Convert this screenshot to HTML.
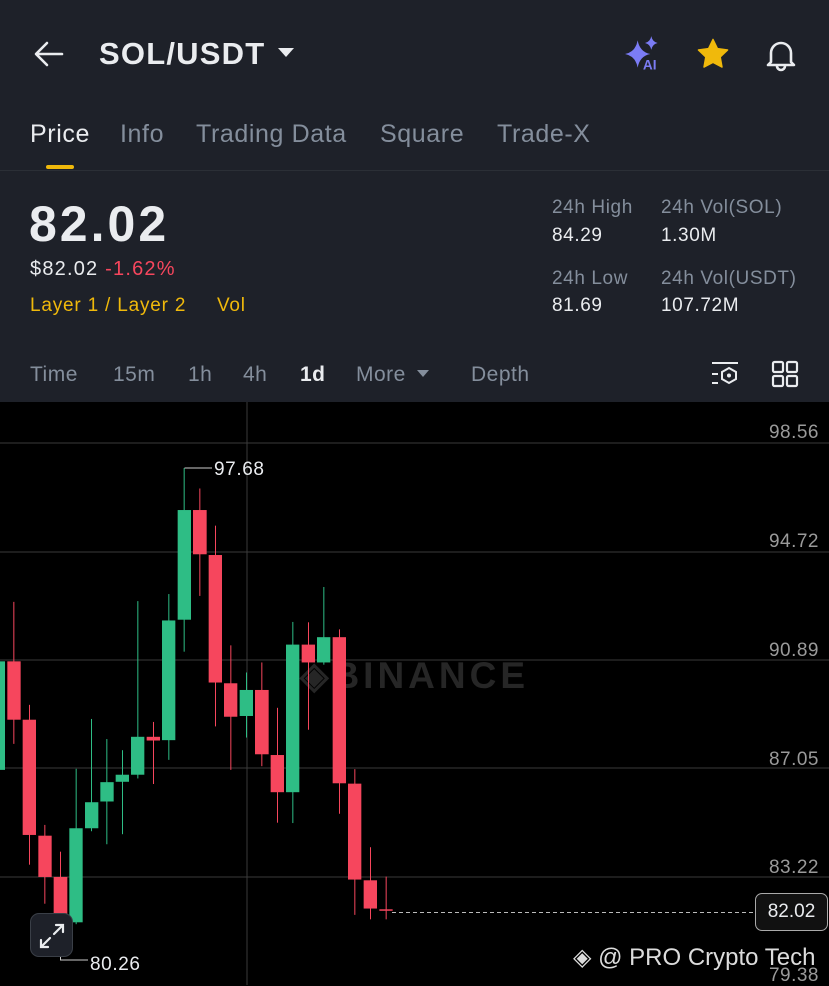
<!DOCTYPE html>
<html><head><meta charset="utf-8"><style>
*{margin:0;padding:0;box-sizing:border-box}
body{width:829px;height:985px;overflow:hidden;background:#000;font-family:"Liberation Sans",sans-serif;position:relative}
#top{position:absolute;left:0;top:0;width:829px;height:402px;background:#1e2129}
.t{position:absolute;white-space:nowrap;line-height:1}
.g{color:#848e9c}.w{color:#eaecef}.y{color:#f0b90b}
.tab{font-size:25px;letter-spacing:0.6px}
.st{font-size:19px;letter-spacing:0.6px}
.tm{font-size:21px;letter-spacing:0.5px}
.ax{position:absolute;right:10px;color:#9a9a9a;font-size:19px;line-height:1;letter-spacing:0.5px}
</style></head><body>
<div id="top">
<svg style="position:absolute;left:33px;top:40px" width="32" height="28" viewBox="0 0 32 28"><path d="M29 14H4M14 3L3 14l11 11" fill="none" stroke="#eaecef" stroke-width="2.6" stroke-linecap="round" stroke-linejoin="round"/></svg>
<div class="t w" style="left:99px;top:38px;font-size:31px;font-weight:bold;letter-spacing:1.2px">SOL/USDT</div>
<svg style="position:absolute;left:277px;top:47px" width="18" height="12"><path d="M1 1h16l-8 9z" fill="#eaecef"/></svg>
<svg style="position:absolute;left:624px;top:36px" width="42" height="36" viewBox="0 0 40 34"><path d="M13 4 Q15 15 25 17 Q15 19 13 30 Q11 19 1 17 Q11 15 13 4Z" fill="#7b7cf5"/><path d="M26 0 Q27 5.5 32 6.5 Q27 7.5 26 13 Q25 7.5 20 6.5 Q25 5.5 26 0Z" fill="#7b7cf5"/><text x="18" y="32" font-size="13" font-weight="bold" fill="#7b7cf5" font-family="Liberation Sans">AI</text></svg>
<svg style="position:absolute;left:696px;top:38px" width="34" height="32" viewBox="0 0 24 23"><path d="M12 1l3.2 6.6 7.3 1-5.3 5.1 1.3 7.2L12 17.5 5.5 20.9l1.3-7.2L1.5 8.6l7.3-1z" fill="#f0b90b" stroke="#f0b90b" stroke-linejoin="round"/></svg>
<svg style="position:absolute;left:764px;top:38px" width="34" height="34" viewBox="0 0 34 34"><path d="M7 24V15a10 10 0 0 1 20 0v9l3 3H4z" fill="none" stroke="#eaecef" stroke-width="2.6" stroke-linejoin="round"/><path d="M13 28a4 4 0 0 0 8 0" fill="none" stroke="#eaecef" stroke-width="2.6"/></svg>
<div class="t w tab" style="left:30px;top:122px">Price</div>
<div class="t g tab" style="left:120px;top:122px">Info</div>
<div class="t g tab" style="left:196px;top:122px">Trading Data</div>
<div class="t g tab" style="left:380px;top:122px">Square</div>
<div class="t g tab" style="left:497px;top:122px">Trade-X</div>
<div style="position:absolute;left:46px;top:165px;width:28px;height:4px;background:#f0b90b;border-radius:2px"></div>
<div style="position:absolute;left:0;top:170px;width:829px;height:1px;background:#2b2f36"></div>
<div class="t w" style="left:29px;top:199px;font-size:50px;font-weight:bold;letter-spacing:3px">82.02</div>
<div class="t w" style="left:30px;top:259px;font-size:20px;letter-spacing:1.2px">$82.02 <span style="color:#f6465d">-1.62%</span></div>
<div class="t y" style="left:30px;top:296px;font-size:19px;letter-spacing:0.8px">Layer 1 / Layer 2</div>
<div class="t y" style="left:217px;top:296px;font-size:19px;letter-spacing:0.8px">Vol</div>
<div class="t g st" style="left:552px;top:198px">24h High</div>
<div class="t w st" style="left:552px;top:226px">84.29</div>
<div class="t g st" style="left:661px;top:198px">24h Vol(SOL)</div>
<div class="t w st" style="left:661px;top:226px">1.30M</div>
<div class="t g st" style="left:552px;top:269px">24h Low</div>
<div class="t w st" style="left:552px;top:296px">81.69</div>
<div class="t g st" style="left:661px;top:269px">24h Vol(USDT)</div>
<div class="t w st" style="left:661px;top:296px">107.72M</div>
<div class="t g tm" style="left:30px;top:364px">Time</div>
<div class="t g tm" style="left:113px;top:364px">15m</div>
<div class="t g tm" style="left:188px;top:364px">1h</div>
<div class="t g tm" style="left:243px;top:364px">4h</div>
<div class="t w tm" style="left:300px;top:364px;font-weight:bold">1d</div>
<div class="t g tm" style="left:356px;top:364px">More</div>
<svg style="position:absolute;left:416px;top:369px" width="14" height="10"><path d="M1 1h12l-6 7z" fill="#848e9c"/></svg>
<div class="t g tm" style="left:471px;top:364px">Depth</div>
<svg style="position:absolute;left:710px;top:360px" width="30" height="28" viewBox="0 0 30 28"><path d="M2 3h26M2 14h6M2 23h6" stroke="#eaecef" stroke-width="2"/><path d="M19 8l7 4v7l-7 4-7-4v-7z" fill="none" stroke="#eaecef" stroke-width="2"/><circle cx="19" cy="15.5" r="2" fill="#eaecef"/></svg>
<svg style="position:absolute;left:771px;top:360px" width="28" height="28" viewBox="0 0 28 28" fill="none" stroke="#eaecef" stroke-width="2.2"><rect x="2" y="2" width="10" height="10" rx="1.5"/><rect x="16" y="2" width="10" height="10" rx="1.5"/><rect x="2" y="16" width="10" height="10" rx="1.5"/><rect x="16" y="16" width="10" height="10" rx="1.5"/></svg>
</div>

<svg style="position:absolute;left:0;top:402px" width="829" height="583">
<g stroke="#3a3a3a" stroke-width="1">
<line x1="0" y1="41" x2="829" y2="41"/><line x1="0" y1="150" x2="829" y2="150"/><line x1="0" y1="258" x2="829" y2="258"/><line x1="0" y1="366" x2="829" y2="366"/><line x1="0" y1="475" x2="829" y2="475"/>
<line x1="247" y1="0" x2="247" y2="583"/>
</g>
<text x="300" y="286" font-size="37" font-weight="bold" fill="#262626" font-family="Liberation Sans" letter-spacing="4">◈BINANCE</text>
</svg>

<svg style="position:absolute;left:0;top:0" width="829" height="985">
<g transform="translate(0,400) scale(0.33333,0.37175)">
<g fill="#2ebd85">
<rect x="0" y="703" width="15" height="292"/>
<rect x="227" y="992" width="3" height="418"/><rect x="208" y="1152" width="40" height="253"/>
<rect x="273" y="858" width="3" height="302"/><rect x="255" y="1082" width="40" height="70"/>
<rect x="319" y="912" width="3" height="283"/><rect x="301" y="1028" width="40" height="52"/>
<rect x="366" y="942" width="3" height="226"/><rect x="347" y="1008" width="40" height="19"/>
<rect x="412" y="541" width="3" height="477"/><rect x="393" y="906" width="40" height="102"/>
<rect x="505" y="522" width="3" height="446"/><rect x="486" y="593" width="40" height="322"/>
<rect x="551" y="183" width="3" height="494"/><rect x="533" y="296" width="40" height="295"/>
<rect x="738" y="733" width="3" height="175"/><rect x="719" y="780" width="40" height="70"/>
<rect x="877" y="597" width="3" height="541"/><rect x="858" y="658" width="40" height="397"/>
<rect x="970" y="503" width="3" height="209"/><rect x="951" y="638" width="40" height="68"/>
</g>
<g fill="#f6465d">
<rect x="40" y="543" width="3" height="382"/><rect x="22" y="703" width="40" height="157"/>
<rect x="87" y="820" width="3" height="430"/><rect x="68" y="860" width="40" height="310"/>
<rect x="133" y="1143" width="3" height="212"/><rect x="115" y="1172" width="40" height="111"/>
<rect x="180" y="1215" width="3" height="290"/><rect x="161" y="1283" width="41" height="117"/>
<rect x="459" y="866" width="3" height="167"/><rect x="440" y="906" width="40" height="10"/>
<rect x="598" y="238" width="3" height="289"/><rect x="579" y="296" width="41" height="119"/>
<rect x="645" y="338" width="3" height="540"/><rect x="626" y="417" width="40" height="343"/>
<rect x="691" y="660" width="3" height="335"/><rect x="672" y="762" width="40" height="90"/>
<rect x="784" y="706" width="3" height="279"/><rect x="765" y="780" width="41" height="173"/>
<rect x="831" y="828" width="3" height="309"/><rect x="812" y="955" width="40" height="100"/>
<rect x="924" y="598" width="3" height="289"/><rect x="905" y="658" width="40" height="48"/>
<rect x="1017" y="617" width="3" height="496"/><rect x="998" y="638" width="40" height="393"/>
<rect x="1063" y="993" width="3" height="392"/><rect x="1044" y="1032" width="40" height="258"/>
<rect x="1110" y="1203" width="3" height="194"/><rect x="1091" y="1292" width="40" height="76"/>
<rect x="1157" y="1282" width="3" height="115"/><rect x="1138" y="1370" width="40" height="4"/>
</g>
</g>
<path d="M184.5 468V468H212M60.5 950V960H88" fill="none" stroke="#ccc" stroke-width="1"/>
<line x1="392" y1="912.5" x2="755" y2="912.5" stroke="#bbb" stroke-dasharray="4 3"/>
<text x="214" y="475" font-size="19" fill="#eaecef" font-family="Liberation Sans" letter-spacing="0.6">97.68</text>
<text x="90" y="970" font-size="19" fill="#eaecef" font-family="Liberation Sans" letter-spacing="0.6">80.26</text>
</svg>

<div class="ax" style="top:423px">98.56</div>
<div class="ax" style="top:532px">94.72</div>
<div class="ax" style="top:641px">90.89</div>
<div class="ax" style="top:750px">87.05</div>
<div class="ax" style="top:858px">83.22</div>
<div class="ax" style="top:966px">79.38</div>
<div style="position:absolute;left:755px;top:893px;width:73px;height:38px;border:1px solid #aaa;border-radius:7px;background:#111;color:#eaecef;font-size:19px;line-height:36px;text-align:center">82.02</div>
<div style="position:absolute;left:30px;top:913px;width:43px;height:44px;border-radius:9px;background:#1e2129;border:1px solid #3a3f47"></div>
<svg style="position:absolute;left:38px;top:922px" width="28" height="28" viewBox="0 0 28 28" fill="none" stroke="#eaecef" stroke-width="2.2" stroke-linecap="round"><path d="M16 12l9-9M18 3h7v7M12 16l-9 9M3 18v7h7"/></svg>
<div class="t" style="left:573px;top:946px;font-size:24px;color:#dcdcdc"><span style="font-size:24px">◈</span> @ PRO Crypto Tech</div>
</body></html>
